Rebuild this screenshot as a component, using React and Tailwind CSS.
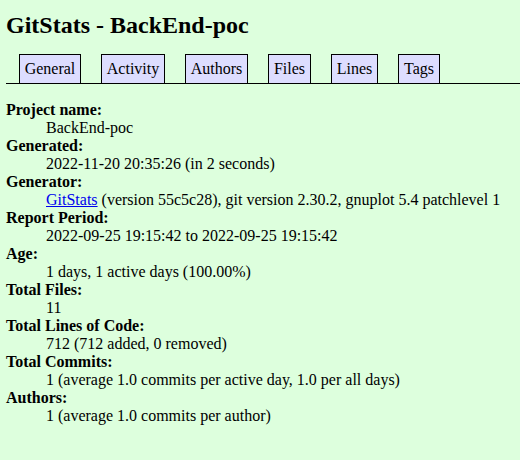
import React from "react";

const tabs = [
  { label: "General", w: "w-[62px]" },
  { label: "Activity", w: "w-[64px]" },
  { label: "Authors", w: "w-[63px]" },
  { label: "Files", w: "w-[43px]" },
  { label: "Lines", w: "w-[47px]" },
  { label: "Tags", w: "w-[42px]" },
];

const info = [
  ["Project name:", "BackEnd-poc"],
  ["Generated:", "2022-11-20 20:35:26 (in 2 seconds)"],
  [
    "Generator:",
    <>
      <a href="#" className="text-[#0000ee] underline">
        GitStats
      </a>{" "}
      (version 55c5c28), git version 2.30.2, gnuplot 5.4 patchlevel 1
    </>,
  ],
  ["Report Period:", "2022-09-25 19:15:42 to 2022-09-25 19:15:42"],
  ["Age:", "1 days, 1 active days (100.00%)"],
  ["Total Files:", "11"],
  ["Total Lines of Code:", "712 (712 added, 0 removed)"],
  ["Total Commits:", "1 (average 1.0 commits per active day, 1.0 per all days)"],
  ["Authors:", "1 (average 1.0 commits per author)"],
];

export default function App() {
  return (
    <div className="min-h-[460px] bg-[#ddffdd] pl-[6px] pt-[11px] font-['Liberation_Serif',serif] text-[16px] leading-[18px] text-black">
      <h1 className="text-[24px] leading-[28px] font-bold">GitStats - BackEnd-poc</h1>

      <div className="mt-[15px] flex gap-[20px] border-b border-black pl-[13px]">
        {tabs.map((t) => (
          <a
            key={t.label}
            href="#"
            className={`${t.w} -mb-px flex h-[30px] items-center justify-center border border-black bg-[#ddddff] whitespace-nowrap`}
          >
            {t.label}
          </a>
        ))}
      </div>

      <dl className="mt-[17px]">
        {info.map(([k, v], i) => (
          <React.Fragment key={i}>
            <dt className="font-bold">{k}</dt>
            <dd className="ml-[40px]">{v}</dd>
          </React.Fragment>
        ))}
      </dl>
    </div>
  );
}
